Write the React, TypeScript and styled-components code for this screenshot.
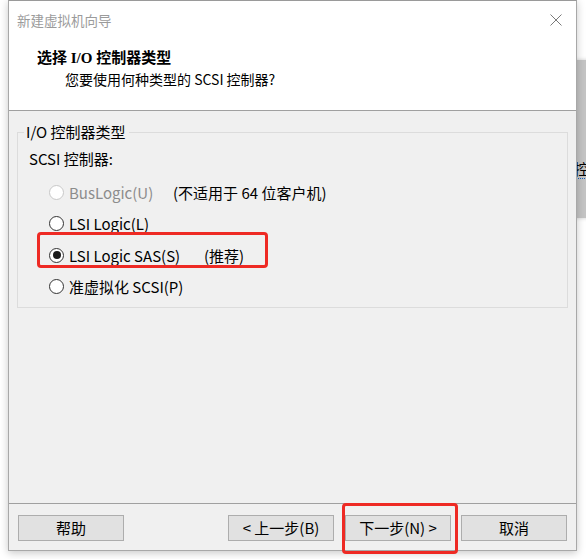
import React from "react";
import styled, { createGlobalStyle } from "styled-components";

const Global = createGlobalStyle`
  html, body { margin: 0; padding: 0; background: #ffffff; }
  body { width: 586px; height: 559px; overflow: hidden; font-family: "Noto Sans CJK SC", "Noto Sans", sans-serif; }
`;

const Desktop = styled.div`
  position: relative;
  width: 586px;
  height: 559px;
  background: #ffffff;
  overflow: hidden;
`;

const BackWindow = styled.div`
  position: absolute;
  left: 572px;
  top: 60px;
  width: 30px;
  height: 158px;
  background: #c4c4c4;
  box-shadow: 0 0 4px rgba(0, 0, 0, 0.2);
`;

const BackText = styled.span`
  position: absolute;
  left: 2px;
  top: 100px;
  font-size: 15px;
  color: #000;
  line-height: 18px;
  border-bottom: 1px dotted #1060c0;
`;

const Window = styled.div`
  position: absolute;
  left: 8px;
  top: 0;
  width: 567px;
  height: 549px;
  border: 1px solid #a8a8a8;
  border-top-color: #9a9a9a;
  background: #f0f0f0;
  box-shadow: 0 2px 8px rgba(0, 0, 0, 0.22);
  display: flex;
  flex-direction: column;
`;

const Header = styled.div`
  background: #ffffff;
  height: 109px;
  border-bottom: 1px solid #a0a0a0;
  display: flex;
  flex-direction: column;
`;

const TitleBar = styled.div`
  height: 38px;
  display: flex;
  align-items: center;
  justify-content: space-between;
  padding: 0 14px 0 8px;
`;

const TitleText = styled.span`
  font-size: 13.5px;
  color: #9b9b9b;
`;

const CloseIcon = styled.svg`
  width: 12px;
  height: 12px;
`;

const HeaderTitle = styled.div`
  font-family: "Liberation Serif", "Noto Sans CJK SC", serif;
  font-weight: bold;
  font-size: 15px;
  color: #000;
  padding-left: 28px;
  margin-top: 9px;
  line-height: 20px;
`;

const HeaderSub = styled.div`
  font-size: 14px;
  color: #000;
  padding-left: 56px;
  line-height: 20px;
  margin-top: 1px;
`;

const Body = styled.div`
  flex: 1;
  padding: 12px 8px 0 8px;
`;

const Group = styled.fieldset`
  margin: 0;
  padding: 8px 0 0 11px;
  border: 1px solid #dcdcdc;
  height: 185px;
  box-sizing: border-box;
  width: 551px;
  min-inline-size: 0;
`;

const Legend = styled.legend`
  font-size: 15px;
  color: #000;
  padding: 0 3px 0 2px;
  margin-left: -5px;
  line-height: 18px;
`;

const Label = styled.div`
  font-size: 15px;
  color: #000;
  line-height: 20px;
  margin-bottom: 4px;
`;

const Options = styled.div`
  display: flex;
  flex-direction: column;
  padding-left: 20px;
  gap: 11.5px;
  margin-top: 13px;
`;

const Row = styled.div`
  position: relative;
  display: flex;
  align-items: center;
  height: 20px;
`;

const Radio = styled.span<{ $disabled?: boolean; $checked?: boolean }>`
  width: 13px;
  height: 13px;
  border-radius: 50%;
  border: 1px solid ${(p) => (p.$disabled ? "#c8c8c8" : "#333333")};
  background: #ffffff;
  display: inline-flex;
  align-items: center;
  justify-content: center;
  flex-shrink: 0;
  &::after {
    content: "";
    display: ${(p) => (p.$checked ? "block" : "none")};
    width: 8px;
    height: 8px;
    border-radius: 50%;
    background: #1a1a1a;
  }
`;

const OptText = styled.span<{ $disabled?: boolean; $w?: number }>`
  font-size: 15px;
  color: ${(p) => (p.$disabled ? "#8c8c8c" : "#000000")};
  margin-left: 5px;
  width: ${(p) => (p.$w ? `${p.$w}px` : "auto")};
  white-space: nowrap;
`;

const Note = styled.span`
  font-size: 15px;
  color: #000;
  white-space: nowrap;
`;

const Highlight = styled.div<{ $l: number; $t: number; $w: number; $h: number }>`
  position: absolute;
  left: ${(p) => p.$l}px;
  top: ${(p) => p.$t}px;
  width: ${(p) => p.$w}px;
  height: ${(p) => p.$h}px;
  border: 3px solid #ee2a24;
  border-radius: 4px;
  box-sizing: border-box;
  pointer-events: none;
`;

const Footer = styled.div`
  border-top: 1px solid #a0a0a0;
  height: 47px;
  display: flex;
  align-items: flex-start;
  padding: 11px 9px 0 9px;
  box-sizing: border-box;
`;

const Spacer = styled.div`
  flex: 1;
`;

const Button = styled.button<{ $ml?: number }>`
  position: relative;
  width: 106px;
  height: 26px;
  margin-left: ${(p) => p.$ml ?? 0}px;
  background: #e1e1e1;
  border: 1px solid #adadad;
  font-family: "Noto Sans CJK SC", "Noto Sans", sans-serif;
  font-size: 15px;
  color: #000;
  padding: 0;
  line-height: 22px;
`;

export default function App() {
  return (
    <Desktop>
      <Global />
      <BackWindow>
        <BackText>控</BackText>
      </BackWindow>
      <Window>
        <Header>
          <TitleBar>
            <TitleText>新建虚拟机向导</TitleText>
            <CloseIcon viewBox="0 0 12 12">
              <path d="M0.5 0.5 L11.5 11.5 M11.5 0.5 L0.5 11.5" stroke="#7a7a7a" strokeWidth="1" fill="none" />
            </CloseIcon>
          </TitleBar>
          <HeaderTitle>选择 I/O 控制器类型</HeaderTitle>
          <HeaderSub>您要使用何种类型的 SCSI 控制器?</HeaderSub>
        </Header>
        <Body>
          <Group>
            <Legend>I/O 控制器类型</Legend>
            <Label>SCSI 控制器:</Label>
            <Options>
              <Row>
                <Radio $disabled />
                <OptText $disabled $w={104}>BusLogic(U)</OptText>
                <Note>(不适用于 64 位客户机)</Note>
              </Row>
              <Row>
                <Radio />
                <OptText>LSI Logic(L)</OptText>
              </Row>
              <Row>
                <Radio $checked />
                <OptText $w={135}>LSI Logic SAS(S)</OptText>
                <Note>(推荐)</Note>
                <Highlight $l={-12} $t={-13} $w={231} $h={36} />
              </Row>
              <Row>
                <Radio />
                <OptText>准虚拟化 SCSI(P)</OptText>
              </Row>
            </Options>
          </Group>
        </Body>
        <Footer>
          <Button>帮助</Button>
          <Spacer />
          <Button>&lt; 上一步(B)</Button>
          <Button $ml={11}>
            下一步(N) &gt;
            <Highlight $l={-4} $t={-13} $w={116} $h={51} />
          </Button>
          <Button $ml={10}>取消</Button>
        </Footer>
      </Window>
    </Desktop>
  );
}
